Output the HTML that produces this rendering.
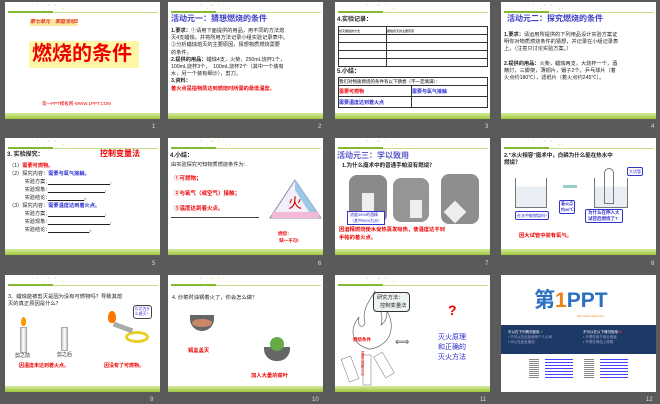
<!DOCTYPE html><html><head><meta charset="utf-8"><style>
*{margin:0;padding:0;box-sizing:border-box}
body{width:660px;height:404px;background:#5a5a5a;position:relative;overflow:hidden;font-family:"Liberation Sans","Noto Sans CJK SC",sans-serif}
.s{position:absolute;width:155px;height:117px;background:#fff;overflow:hidden}
.s .tl{position:absolute;left:3px;top:10px;width:150px;height:1px;background:#c5de8a}
.s .tg{position:absolute;left:3px;top:9px;width:45px;height:2px;background:#86b832}
.s .dec{position:absolute;left:32px;top:3px;font-size:6px;color:#b5d43a;letter-spacing:2px}
.s .bb{position:absolute;left:0;bottom:0;width:100%;height:6px;background:linear-gradient(#d6eaa0,#9cc63c)}
.n{position:absolute;color:#ddd;font-size:6px}
.a{position:absolute;white-space:nowrap;font-size:5.2px;line-height:7.2px;color:#222}
.b{font-weight:bold}.r{color:#e00}.bl{color:#2a2ad0}
.t8{font-size:8px;color:#3c3cc8;font-weight:bold}
table{border-collapse:collapse;position:absolute}td{border:0.6px solid #333;font-size:4.5px;height:8px}
</style></head><body>

<!-- slide 1 -->
<div class="s" style="left:5px;top:2px">
<div class="tl"></div><div class="tg"></div><div class="dec">' ." ' ,.</div>
<div class="a" style="left:25px;top:17px;background:#fde6a0;color:#d33;font-style:italic;font-weight:bold;font-size:5px">第七单元　家庭活动3</div>
<div style="position:absolute;left:24px;top:39px;width:110px;height:27px;background:#fff7a8"></div>
<div class="a" style="left:27px;top:41px;font-size:20px;line-height:23px;color:#e00;font-weight:bold">燃烧的条件</div>
<div class="a r" style="left:37px;top:98px;font-size:4.5px">第一PPT模板网-WWW.1PPT.COM</div>
<div class="bb"></div></div>
<div class="n" style="left:152px;top:124px">1</div>

<!-- slide 2 -->
<div class="s" style="left:168px;top:2px">
<div class="tl"></div><div class="tg"></div><div class="dec">' ." ' ,.</div>
<div class="a t8" style="left:3px;top:13px">活动元一：猜想燃烧的条件</div>
<div class="a" style="left:3px;top:26px"><b>1.要求：</b>①请用下面提供的用品，用不同的方法熄<br>灭4支蜡烛，并将所用方法记录小组实验记录表中。<br>②分析蜡烛熄灭的主要原因，猜想物质燃烧需要<br>的条件。<br><b>2.提供的用品：</b>蜡烛4支，火柴，250mL烧杯1个，<br>100mL烧杯3个，　100mL烧杯2个（其中一个装有<br>水，另一个装有细沙），剪刀。<br><b>3.资料：</b><br><span class="r b">着火点是指物质达到燃烧时所需的最低温度。</span></div>
<div class="bb"></div></div>
<div class="n" style="left:318px;top:124px">2</div>

<!-- slide 3 -->
<div class="s" style="left:335px;top:2px">
<div class="tl"></div><div class="tg"></div><div class="dec">' ." ' ,.</div>
<div class="a b" style="left:2px;top:15px;font-size:6px">4.实验记录：</div>
<table style="left:3px;top:24px;width:150px"><tr><td style="width:48px;height:7px;font-size:3px">熄灭蜡烛的方法</td><td style="font-size:3px">蜡烛熄灭的主要原因</td></tr><tr><td></td><td></td></tr><tr><td></td><td></td></tr><tr><td></td><td></td></tr><tr><td></td><td></td></tr></table>
<div class="a b" style="left:2px;top:67px;font-size:6px">5.小结：</div>
<table style="left:3px;top:75px;width:150px"><tr><td colspan="2" style="height:8px">我们对物质燃烧的条件有以下猜想（不一定填满）：</td></tr><tr><td class="r b" style="height:11px;font-size:5px;width:73px">需要可燃物</td><td class="bl b" style="font-size:5px">需要与氧气接触</td></tr><tr><td class="bl b" style="height:11px;font-size:5px">需要温度达到着火点</td><td></td></tr></table>
<div class="bb"></div></div>
<div class="n" style="left:485px;top:124px">3</div>

<!-- slide 4 -->
<div class="s" style="left:501px;top:2px">
<div class="tl"></div><div class="tg"></div><div class="dec">' ." ' ,.</div>
<div class="a t8" style="left:6px;top:13px">活动元二：探究燃烧的条件</div>
<div class="a" style="left:3px;top:30px"><b>1.要求：</b>请运用所提供的下列用品设计实验方案证<br>明你对物质燃烧条件的猜想，并记录在小组记录表<br>上。（注意只讨论实验方案。）<br><br><b>2.提供的用品：</b>火柴，蜡烛两支，大烧杯一个，酒<br>精灯，三脚架，薄铜片，镊子2个，乒乓球片（着<br>火点约180℃），滤纸片（着火点约245℃）。</div>
<div class="bb"></div></div>
<div class="n" style="left:651px;top:124px">4</div>

<!-- slide 5 -->
<div class="s" style="left:5px;top:138px">
<div class="tl"></div><div class="tg"></div><div class="dec">' ." ' ,.</div>
<div class="a b" style="left:2px;top:14px;font-size:6px">3. 实验探究：</div>
<div class="a r b" style="left:95px;top:12px;font-size:8px">控制变量法</div>
<div class="a" style="left:4px;top:24px;line-height:8px">（1）<span class="r b">需要可燃物。</span><br>（2）探究内容：<span class="bl b">需要与氧气接触。</span><br>　　　实验方案：<u>　　　　　　　　　　　　</u>,<br>　　　实验现象：<u>　　　　　　　　　　　</u>,<br>　　　实验结论：<u>　　　　　　　</u>。<br>（3）探究内容：<span class="bl b">需要温度达到着火点。</span><br>　　　实验方案：<u>　　　　　　　　　　　</u>,<br>　　　实验现象：<u>　　　　　　　　　　　　</u>,<br>　　　实验结论：<u>　　　　　　　　</u>。</div>
<div class="bb"></div></div>
<div class="n" style="left:152px;top:261px">5</div>

<!-- slide 6 -->
<div class="s" style="left:168px;top:138px">
<div class="tl"></div><div class="tg"></div><div class="dec">' ." ' ,.</div>
<div class="a b" style="left:2px;top:15px;font-size:6px">4.小结：</div>
<div class="a" style="left:3px;top:24px">由实验探究可知物质燃烧条件为：</div>
<div class="a r b" style="left:6px;top:34px;font-size:5.5px;line-height:15px">①可燃物；<br>②与氧气（或空气）接触；<br>③温度达到着火点。</div>
<div style="position:absolute;left:3px;top:79px;width:88px;border-top:0.6px solid #444"></div>
<svg style="position:absolute;left:100px;top:40px" width="55" height="45"><polygon points="27,2 53,40 2,40" fill="#f4eef8" stroke="#88a" stroke-width="1"/><polygon points="27,2 53,40 45,40 27,12" fill="#9cc8e8"/><rect x="4" y="34" width="47" height="6" fill="#f2b8d8"/><text x="20" y="30" font-size="14" fill="#c00" font-family="Noto Sans CJK SC">火</text></svg>
<div class="a r b" style="left:110px;top:92px;font-size:4.5px">燃烧：<br>&nbsp;缺一不可!</div>
<div class="bb"></div></div>
<div class="n" style="left:318px;top:261px">6</div>

<!-- slide 7 -->
<div class="s" style="left:335px;top:138px">
<div class="tl"></div><div class="tg"></div><div class="dec">' ." ' ,.</div>
<div class="a t8" style="left:2px;top:14px;color:#5a5ac8">活动元三：学以致用</div>
<div class="a b" style="left:7px;top:25px;font-size:5.5px">1.为什么魔术中的普通手帕没有燃烧？</div>
<div style="position:absolute;left:14px;top:37px;width:38px;height:48px;background:#8a8a8a;border-radius:8px"></div>
<div style="position:absolute;left:58px;top:40px;width:36px;height:44px;background:#959595;border-radius:8px"></div>
<div style="position:absolute;left:106px;top:36px;width:38px;height:50px;background:#8e8e8e;border-radius:8px"></div>
<div style="position:absolute;left:27px;top:55px;width:12px;height:25px;background:#eee"></div>
<div style="position:absolute;left:75px;top:62px;width:12px;height:18px;background:#eee"></div>
<div style="position:absolute;left:112px;top:66px;width:16px;height:16px;background:#eee;transform:rotate(45deg)"></div>
<div class="a bl" style="left:12px;top:73px;font-size:4px;line-height:6px;border:0.6px solid #33c;background:#fff;padding:0 2px">浓度45%的酒精<br>（其中55%为水）</div>
<div class="a r b" style="left:4px;top:88px;font-size:5.3px;line-height:8px">因酒精燃烧使水受热蒸发吸热，使温度达不到<br>手帕的着火点。</div>
<div class="bb"></div></div>
<div class="n" style="left:485px;top:261px">7</div>

<!-- slide 8 -->
<div class="s" style="left:501px;top:138px">
<div class="tl"></div><div class="tg"></div><div class="dec">' ." ' ,.</div>
<div class="a b" style="left:3px;top:15px;font-size:5.5px">2."水火相容"魔术中，白磷为什么能在热水中<br>燃烧？</div>
<div style="position:absolute;left:14px;top:40px;width:32px;height:30px;border:0.7px solid #777;border-top:none;background:linear-gradient(#fff 30%,#e8eef4 30%)"></div>
<div style="position:absolute;left:62px;top:47px;width:14px;height:3px;background:#9cc"></div>
<div style="position:absolute;left:93px;top:40px;width:34px;height:30px;border:0.7px solid #777;border-top:none;background:linear-gradient(#fff 30%,#e8eef4 30%)"></div>
<div style="position:absolute;left:103px;top:30px;width:10px;height:36px;border:0.7px solid #777;border-radius:5px 5px 0 0"></div>
<div class="a bl" style="left:126px;top:29px;font-size:4px;border:0.6px solid #33c;border-radius:2px;padding:0 1px">大试管</div>
<div class="a bl b" style="left:58px;top:62px;font-size:4px;line-height:6px;border:0.6px solid #33c;border-radius:2px;padding:0 1px">着火点<br>约40℃</div>
<div class="a bl" style="left:14px;top:73px;font-size:4px;border:0.6px solid #33c;border-radius:2px;padding:0 1px">在水中能燃烧吗?</div>
<div class="a bl b" style="left:84px;top:71px;font-size:4.5px;line-height:6px;border:0.6px solid #33c;border-radius:2px;padding:0 2px">为什么在伸入大<br>试管后燃烧了?</div>
<div class="a r b" style="left:18px;top:95px;font-size:5.3px">因大试管中装有氧气。</div>
<div class="bb"></div></div>
<div class="n" style="left:651px;top:261px">8</div>

<!-- slide 9 -->
<div class="s" style="left:5px;top:275px">
<div class="tl"></div><div class="tg"></div><div class="dec">' ." ' ,.</div>
<div class="a" style="left:3px;top:19px;font-size:5.3px">3、蜡烛能被剪灭是因为没有可燃物吗？导致其熄<br>灭的真正原因是什么？</div>
<div style="position:absolute;left:15px;top:52px;width:7px;height:26px;background:linear-gradient(90deg,#ccc,#fff,#ccc);border:0.5px solid #aaa"></div>
<div style="position:absolute;left:16px;top:42px;width:5px;height:9px;background:#f90;border-radius:50% 50% 40% 40%"></div>
<div style="position:absolute;left:56px;top:52px;width:7px;height:24px;background:linear-gradient(90deg,#ccc,#fff,#ccc);border:0.5px solid #aaa"></div>
<div class="a" style="left:10px;top:78px;font-size:5px">剪之前</div>
<div class="a" style="left:52px;top:77px;font-size:5px">剪之后</div>
<div style="position:absolute;left:103px;top:36px;width:8px;height:12px;background:#f70;border-radius:50% 50% 40% 40%"></div>
<div style="position:absolute;left:120px;top:56px;width:24px;height:12px;border:3px solid #e8d020;border-radius:50%"></div>
<div style="position:absolute;left:108px;top:50px;width:20px;height:5px;background:#aaa;transform:rotate(20deg)"></div>
<div class="a bl" style="left:128px;top:30px;font-size:3.8px;line-height:5px;border:0.6px solid #444;border-radius:3px;background:#fff;padding:1px">灯芯为什<br>么熄灭?</div>
<div class="a r b" style="left:14px;top:88px;font-size:5px">因温度未达到着火点。</div>
<div class="a r b" style="left:99px;top:88px;font-size:5px">因没有了可燃物。</div>
<div class="bb"></div></div>
<div class="n" style="left:150px;top:397px">9</div>

<!-- slide 10 -->
<div class="s" style="left:168px;top:275px">
<div class="tl"></div><div class="tg"></div><div class="dec">' ." ' ,.</div>
<div class="a" style="left:4px;top:20px;font-size:5.3px">4. 炒菜时油锅着火了，你会怎么做？</div>
<div style="position:absolute;left:22px;top:40px;width:24px;height:16px;background:#666;border-radius:0 0 12px 12px"></div>
<div style="position:absolute;left:24px;top:44px;width:20px;height:8px;background:#c86;border-radius:50%"></div>
<div style="position:absolute;left:96px;top:72px;width:26px;height:14px;background:#666;border-radius:0 0 12px 12px"></div>
<div style="position:absolute;left:102px;top:62px;width:14px;height:14px;background:#6a4;border-radius:50%"></div>
<div class="a r b" style="left:20px;top:73px;font-size:5.3px">锅盖盖灭</div>
<div class="a r b" style="left:83px;top:98px;font-size:5.3px">加入大量的菜叶</div>
<div class="bb"></div></div>
<div class="n" style="left:312px;top:397px">10</div>

<!-- slide 11 -->
<div class="s" style="left:335px;top:275px">
<div class="tl"></div><div class="tg"></div><div class="dec">' ." ' ,.</div>
<svg style="position:absolute;left:6px;top:14px" width="60" height="100"><path d="M28 60 C10 55 8 40 18 28 C16 38 22 40 24 34 C20 20 30 10 34 2 C34 15 44 22 40 36 C46 32 46 26 46 22 C54 36 52 55 30 60Z" fill="none" stroke="#666" stroke-width="0.7"/><rect x="4" y="68" width="10" height="24" transform="rotate(-20 9 80)" fill="none" stroke="#888" stroke-width="0.6"/><rect x="22" y="66" width="8" height="30" fill="none" stroke="#888" stroke-width="0.6"/><rect x="38" y="64" width="10" height="24" transform="rotate(-30 43 76)" fill="none" stroke="#888" stroke-width="0.6"/></svg>
<div class="a" style="left:38px;top:17px;font-size:5.3px;line-height:8px;border:0.7px solid #333;border-radius:4px;padding:1px 3px;background:#eef4f4">研究方法：<br>&nbsp;&nbsp;控制变量法</div>
<div class="a r b" style="left:18px;top:61px;font-size:4.5px">燃烧条件</div>
<div class="a r" style="left:26px;top:76px;font-size:3.5px;writing-mode:vertical-rl;line-height:4px">温度达到着火点</div>
<div class="a" style="left:60px;top:64px;font-size:10px;color:#555">⟺</div>
<div class="a r b" style="left:113px;top:32px;font-size:14px">?</div>
<div class="a bl" style="left:103px;top:58px;font-size:7px;line-height:10px">灭火原理<br>和正确的<br>灭火方法</div>
<div class="bb"></div></div>
<div class="n" style="left:480px;top:397px">11</div>

<!-- slide 12 -->
<div class="s" style="left:501px;top:275px">
<div class="a" style="left:33px;top:14px;font-size:21px;line-height:24px;font-weight:bold;color:#2a6fc0">第<span style="color:#f08010">1</span>PPT</div>
<div class="a" style="left:76px;top:38px;font-size:3px;color:#f08010">http://www.1ppt.com</div>
<div style="position:absolute;left:0;top:50px;width:155px;height:29px;background:#1d3a66"></div>
<div class="a" style="left:7px;top:55px;font-size:3.5px;color:#fff;line-height:5px">可以在下列情况使用 <span style="color:#6c3">✔</span><br><span style="color:#aac">• 不可以在此处使用个人公司<br>• 可以在此处使用</span></div>
<div class="a" style="left:82px;top:55px;font-size:3.5px;color:#fff;line-height:5px">不可以在以下情况使用 <span style="color:#e33">✖</span><br><span style="color:#aac">• 不得在用于商业用途<br>• 不得在网站上转载</span></div>
<div style="position:absolute;left:28px;top:84px;width:10px;height:20px;background:repeating-linear-gradient(#888 0 1px,#fff 1px 2px)"></div>
<div style="position:absolute;left:44px;top:84px;width:28px;height:20px;background:repeating-linear-gradient(#44f 0 1px,#fff 1px 3px)"></div>
<div style="position:absolute;left:83px;top:84px;width:10px;height:20px;background:repeating-linear-gradient(#888 0 1px,#fff 1px 2px)"></div>
<div style="position:absolute;left:99px;top:84px;width:28px;height:20px;background:repeating-linear-gradient(#44f 0 1px,#fff 1px 3px)"></div>
</div>
<div class="n" style="left:646px;top:397px">12</div>
</body></html>
